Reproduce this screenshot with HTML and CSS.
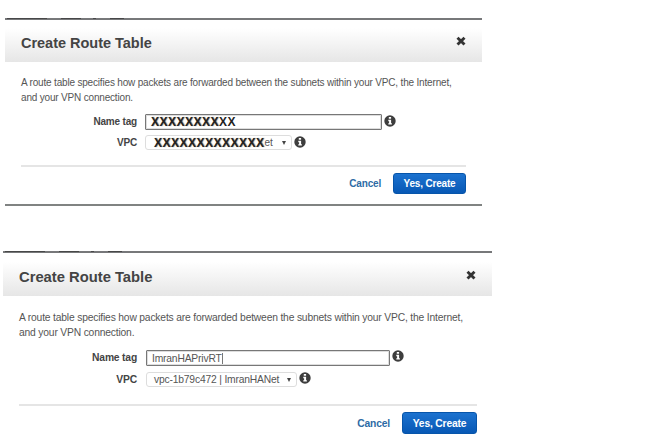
FILE: index.html
```html
<!DOCTYPE html>
<html lang="en">
<head>
<meta charset="utf-8">
<title>Create Route Table</title>
<link rel="stylesheet" href="styles.css">
</head>
<body>
<svg width="0" height="0" class="defs">
  <symbol id="info" viewBox="0 0 12 12"><circle cx="6" cy="6" r="5.7" fill="#3d3d3d"/><path d="M4.8 2h2.3v1.8H4.8zM4.3 4.8h2.8v3.4h.8v1.4H4.3V8.200h.8v-2h-.8z" fill="#fff"/></symbol>
  <symbol id="close" viewBox="0 0 10 10"><path d="M1.500 1.700l7 6.800M8.500 1.700L1.500 8.500" stroke="#333" stroke-width="2.900"/></symbol>
</svg>
<section class="dialog first">
  <header><h1>Create Route Table</h1><svg class="close"><use href="#close"/></svg></header>
  <p>A route table specifies how packets are forwarded between the subnets within your VPC, the Internet,<br>and your VPN connection.</p>
  <div class="row name"><label>Name tag</label><div class="input"><span class="mask">XXXXXXXX<span class="light">XX</span></span></div><svg class="info"><use href="#info"/></svg></div>
  <div class="row vpc"><label>VPC</label><div class="select"><span class="value"><span class="mask">XXXXXXXXXXXXX</span><span>et</span></span><i></i></div><svg class="info"><use href="#info"/></svg></div>
  <footer><a>Cancel</a><button>Yes, Create</button></footer>
</section>
<section class="dialog second">
  <header><h1>Create Route Table</h1><svg class="close"><use href="#close"/></svg></header>
  <p>A route table specifies how packets are forwarded between the subnets within your VPC, the Internet,<br>and your VPN connection.</p>
  <div class="row name"><label>Name tag</label><div class="input"><span>ImranHAPrivRT</span><b class="caret"></b></div><svg class="info"><use href="#info"/></svg></div>
  <div class="row vpc"><label>VPC</label><div class="select"><span>vpc-1b79c472 | ImranHANet</span><i></i></div><svg class="info"><use href="#info"/></svg></div>
  <footer><a>Cancel</a><button>Yes, Create</button></footer>
</section>
</body>
</html>
```
FILE: styles.css
```css
* { box-sizing: border-box; }
body { margin: 0; padding-top: 18px; height: 445px; overflow: hidden; background: #fff; color: #555; font-family: "Liberation Sans", Arial, sans-serif; }
.defs { position: absolute; }
.dialog { position: relative; display: flex; flex-direction: column; border-top: 2px solid #77787a; white-space: nowrap; letter-spacing: -.18px; }
/* dark remnants of the page behind the dialog's top edge */
.dialog::before { content: ""; position: absolute; top: -2px; left: 2px; width: 117px; height: 1px; background: linear-gradient(90deg, #333 0 40px, transparent 40px 54px, #333 54px 74px, transparent 74px 86px, #333 86px 89px, transparent 89px 103px, #333 103px); opacity: .7; }
.first { width: 477px; height: 188px; margin-left: 5px; border-bottom: 2px solid #808382; font-size: 10px; }
.second { width: 489px; height: 194px; margin: 45px 0 0 3px; font-size: 10.3px; }
header { display: flex; justify-content: space-between; align-items: center; height: 42px; padding: 0 16px; background: linear-gradient(#fff 20%, #e6e6e6); }
.second header { height: 43px; }
h1 { margin: 3px 0 0; font-size: 14.5px; line-height: 18px; letter-spacing: -.02px; color: #444; }
.second h1 { margin-top: 5px; font-size: 14.8px; }
.close { width: 10px; height: 10px; }
p { margin: 13px 0 0 16px; line-height: 14.5px; }
.first p { margin-top: 14px; margin-bottom: -1px; }
.second p { margin-top: 14px; line-height: 15px; }
.row { display: flex; height: 16px; }
.name { margin-top: 10px; }
.vpc { margin-top: 5px; }
.second .vpc { margin-top: 6px; }
label { width: 132px; line-height: 16px; text-align: right; font-weight: bold; color: #444; }
.second label { width: 134px; }
.input { display: flex; align-items: center; width: 237px; height: 16px; margin-left: 8px; padding-left: 5px; border: 1px solid #777; border-radius: 1px; box-shadow: inset 0 0 0 1px #ddd; }
.second .input { width: 244px; margin-left: 9px; }
.select { display: flex; align-items: center; width: 147px; height: 15px; margin-left: 8px; padding: 0 5px 0 8px; border: 1px solid #ddd; border-radius: 3px; justify-content: space-between; }
.second .select { width: 151px; margin-left: 9px; padding-left: 7px; }
.select i { border: 2px solid transparent; border-top: 4px solid #444; border-bottom: 0; }
.caret { width: 1px; height: 11px; background: #777; }
.value { display: flex; align-items: center; }
.mask { font-size: 12px; font-weight: bold; letter-spacing: .5px; color: #222; text-shadow: .7px 0 1px #777; }
.light { text-shadow: none; font-weight: bold; }
.info { width: 12px; height: 12px; margin: 1px 0 0 2px; }
.second .info { margin-top: 0; }
footer { display: flex; align-items: center; justify-content: flex-end; margin: 14px 16px 0; padding-top: 6px; border-top: 2px solid #e5e5e5; }
.second footer { margin: 16px 15px 0 16px; }
a { color: #2d6ba5; font-weight: bold; margin-right: 12px; }
button { width: 73px; height: 21px; padding: 0; border: 1px solid #0755aa; border-radius: 3px; background: linear-gradient(#1c72cf, #0758b5); color: #fff; font: bold 1em "Liberation Sans", Arial, sans-serif; letter-spacing: -.18px; }
.second button { width: 75px; height: 22px; }
```
